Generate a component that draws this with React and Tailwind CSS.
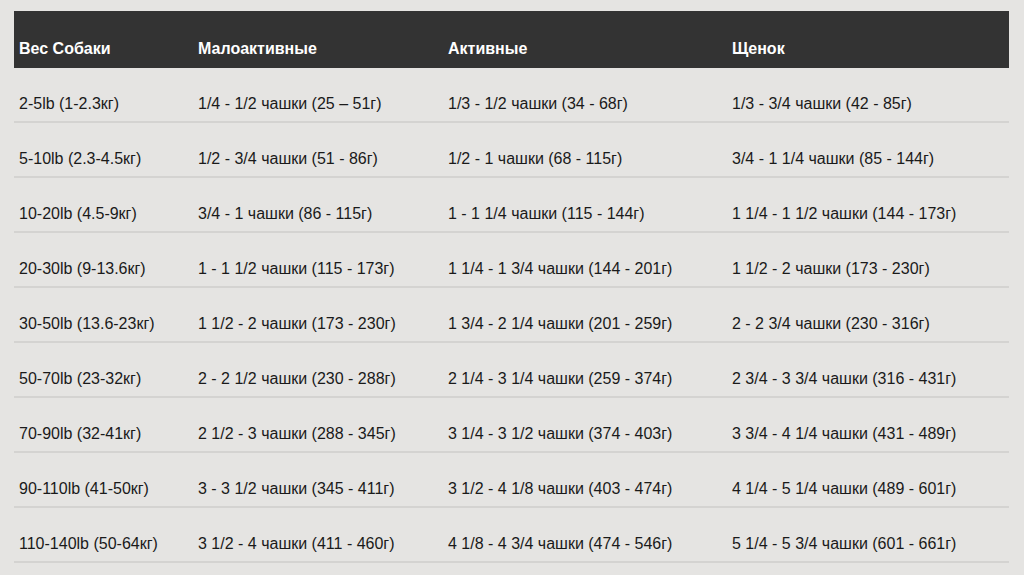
const headers = ["Вес Собаки", "Малоактивные", "Активные", "Щенок"];

const rows = [
  ["2-5lb (1-2.3кг)", "1/4 - 1/2 чашки (25 – 51г)", "1/3 - 1/2 чашки (34 - 68г)", "1/3 - 3/4 чашки (42 - 85г)"],
  ["5-10lb (2.3-4.5кг)", "1/2 - 3/4 чашки (51 - 86г)", "1/2 - 1 чашки (68 - 115г)", "3/4 - 1 1/4 чашки (85 - 144г)"],
  ["10-20lb (4.5-9кг)", "3/4 - 1 чашки (86 - 115г)", "1 - 1 1/4 чашки (115 - 144г)", "1 1/4 - 1 1/2 чашки (144 - 173г)"],
  ["20-30lb (9-13.6кг)", "1 - 1 1/2 чашки (115 - 173г)", "1 1/4 - 1 3/4 чашки (144 - 201г)", "1 1/2 - 2 чашки (173 - 230г)"],
  ["30-50lb (13.6-23кг)", "1 1/2 - 2 чашки (173 - 230г)", "1 3/4 - 2 1/4 чашки (201 - 259г)", "2 - 2 3/4 чашки (230 - 316г)"],
  ["50-70lb (23-32кг)", "2 - 2 1/2 чашки (230 - 288г)", "2 1/4 - 3 1/4 чашки (259 - 374г)", "2 3/4 - 3 3/4 чашки (316 - 431г)"],
  ["70-90lb (32-41кг)", "2 1/2 - 3 чашки (288 - 345г)", "3 1/4 - 3 1/2 чашки (374 - 403г)", "3 3/4 - 4 1/4 чашки (431 - 489г)"],
  ["90-110lb (41-50кг)", "3 - 3 1/2 чашки (345 - 411г)", "3 1/2 - 4 1/8 чашки (403 - 474г)", "4 1/4 - 5 1/4 чашки (489 - 601г)"],
  ["110-140lb (50-64кг)", "3 1/2 - 4 чашки (411 - 460г)", "4 1/8 - 4 3/4 чашки (474 - 546г)", "5 1/4 - 5 3/4 чашки (601 - 661г)"],
];

const cols = "grid grid-cols-[179px_250px_284px_282px]";

export default function App() {
  return (
    <div
      className="min-h-[575px] w-[1024px] bg-[#e5e4e2] pt-[11px] pl-[14px]"
      style={{ fontFamily: "'Liberation Sans', Arial, sans-serif" }}
    >
      <div className="w-[995px]">
        {/* header */}
        <div className={`${cols} h-[57px] bg-[#333333] text-white font-bold text-[16px]`}>
          {headers.map((h) => (
            <div key={h} className="pl-[5px] pt-[29px] leading-[18px]">
              {h}
            </div>
          ))}
        </div>

        {/* rows */}
        {rows.map((r, i) => (
          <div
            key={i}
            className={`${cols} h-[55px] border-b-2 border-[#d4d3d1] text-[16px] text-[#1a1a1a]`}
          >
            {r.map((c, j) => (
              <div key={j} className="pl-[5px] pt-[27px] leading-[18px]">
                {c}
              </div>
            ))}
          </div>
        ))}
      </div>
    </div>
  );
}
